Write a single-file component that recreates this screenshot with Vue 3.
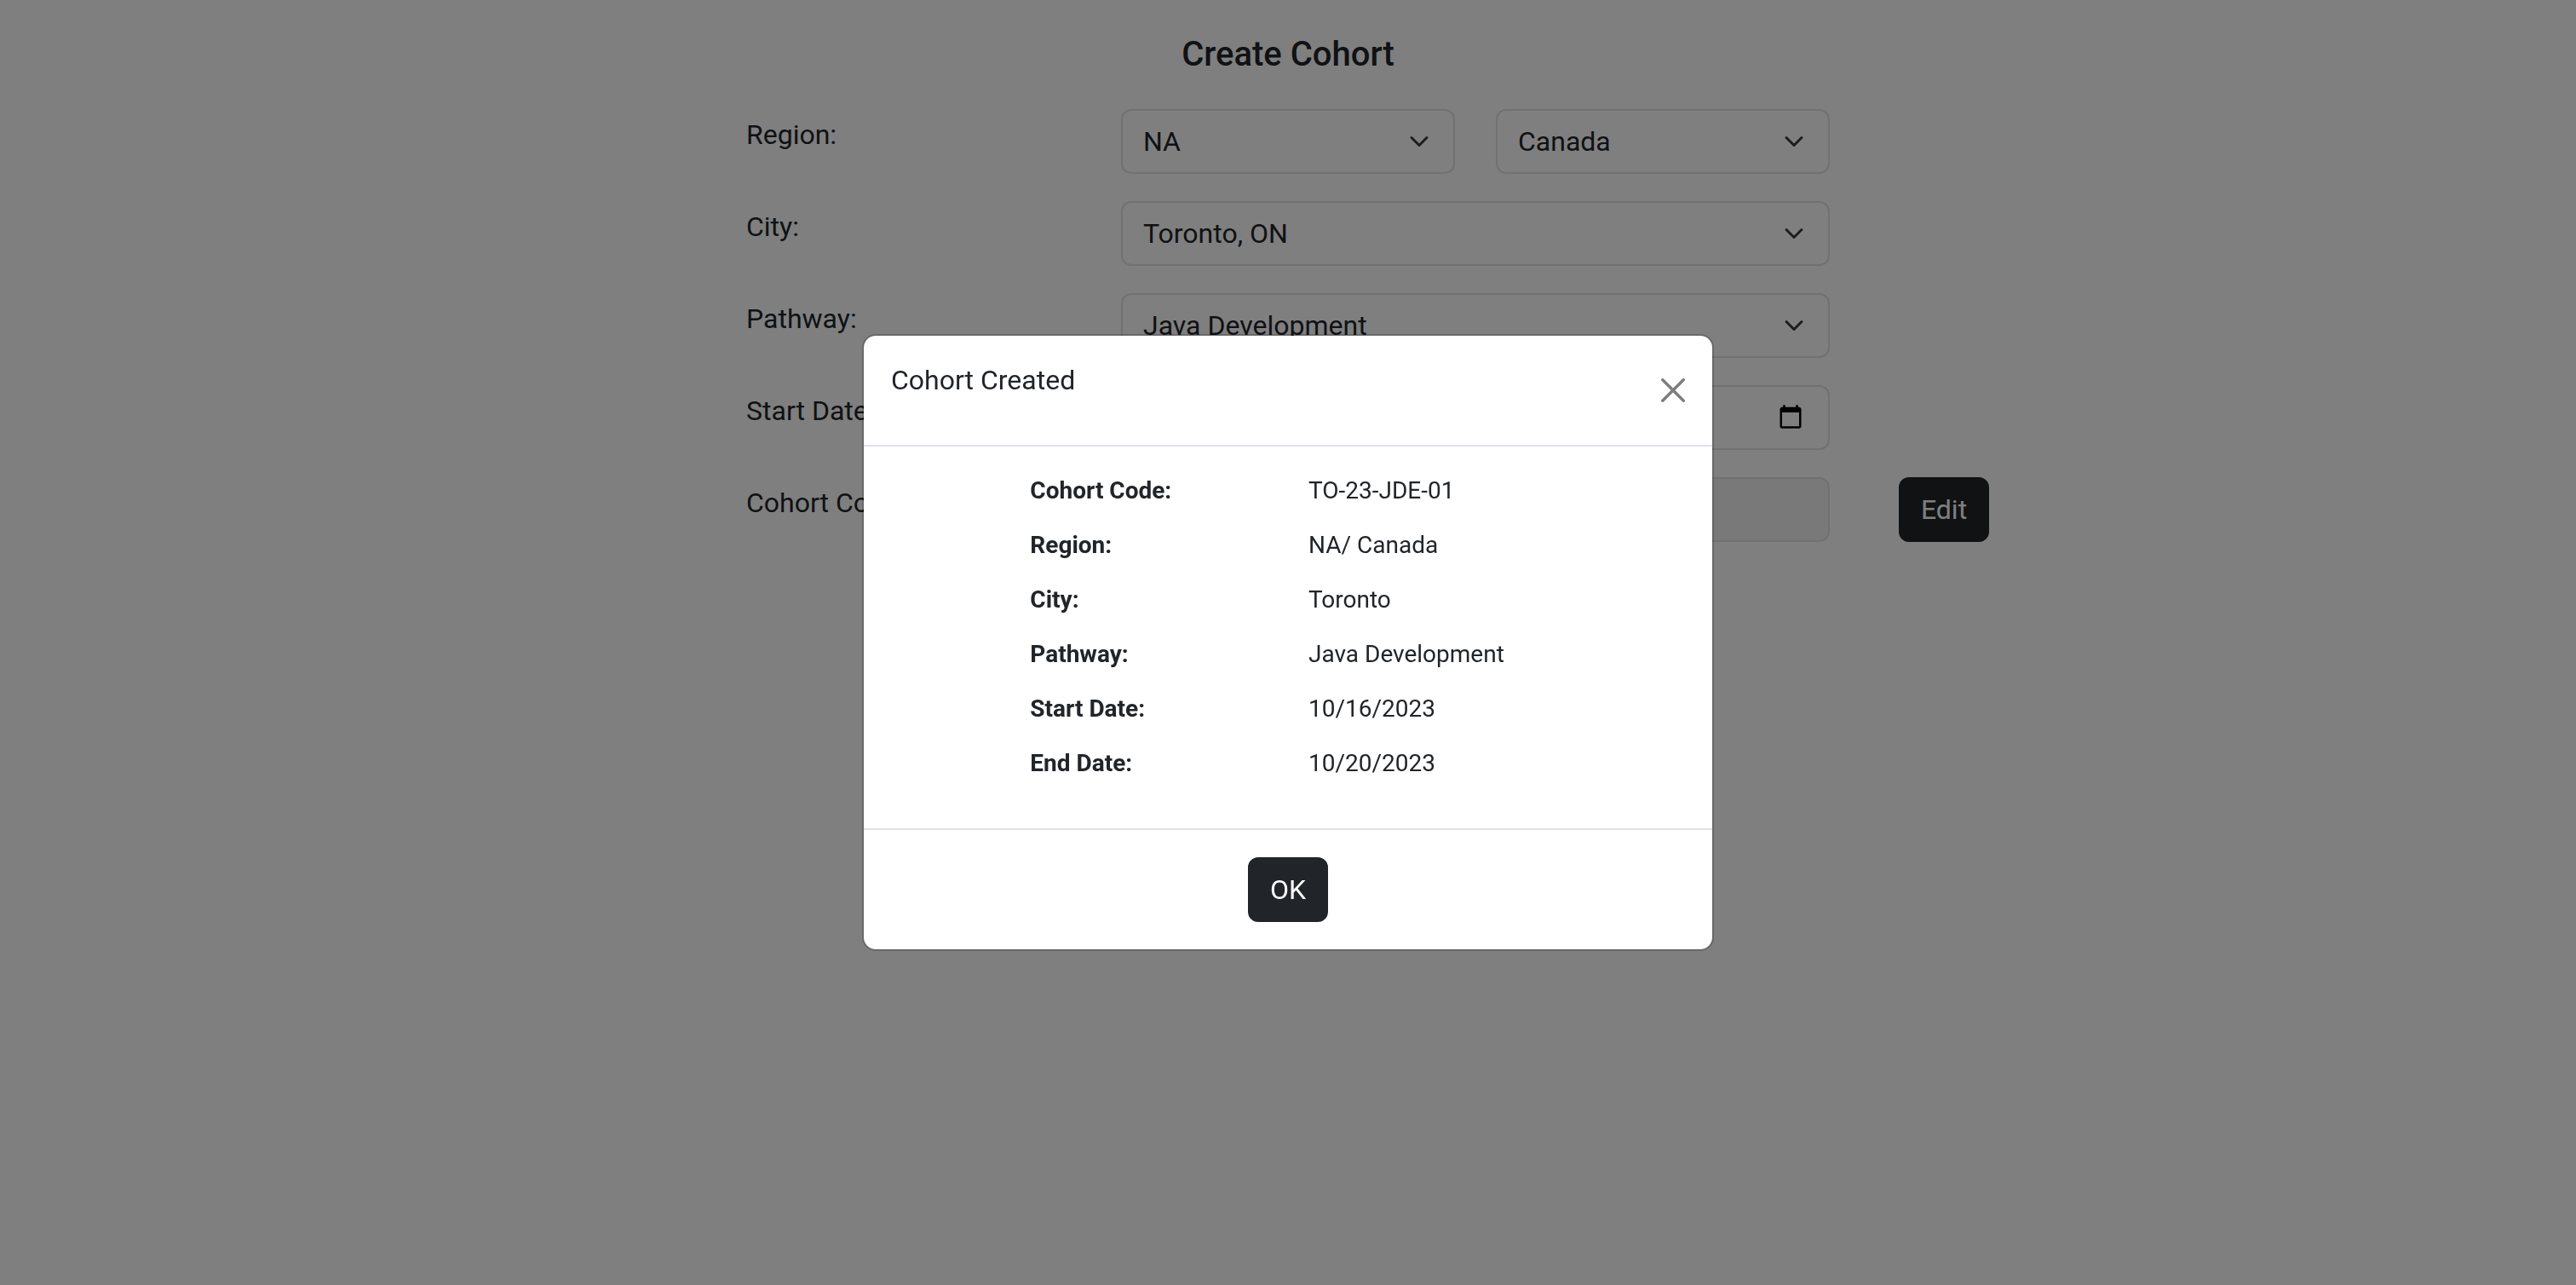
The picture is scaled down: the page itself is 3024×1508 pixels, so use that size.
<script setup>
import { ref } from 'vue'

const region = ref('NA')
const country = ref('Canada')
const city = ref('Toronto, ON')
const pathway = ref('Java Development')
const startDate = ref('2023-10-16')
const cohortCode = ref('TO-23-JDE-01')
const showModal = ref(true)

const summary = [
  { label: 'Cohort Code:', value: 'TO-23-JDE-01' },
  { label: 'Region:', value: 'NA/ Canada' },
  { label: 'City:', value: 'Toronto' },
  { label: 'Pathway:', value: 'Java Development' },
  { label: 'Start Date:', value: '10/16/2023' },
  { label: 'End Date:', value: '10/20/2023' }
]
</script>

<template>
  <main class="page">
    <h1 class="page-title">Create Cohort</h1>
    <form class="form" @submit.prevent>
      <div class="row">
        <label class="cell name" for="region">Region:</label>
        <div class="cell half">
          <div class="field">
            <select id="region" v-model="region" class="control">
              <option>NA</option>
            </select>
            <svg class="chevron" viewBox="0 0 16 16" aria-hidden="true"><path d="m2 5 6 6 6-6" /></svg>
          </div>
        </div>
        <div class="cell half">
          <div class="field">
            <select v-model="country" class="control" aria-label="Country">
              <option>Canada</option>
            </select>
            <svg class="chevron" viewBox="0 0 16 16" aria-hidden="true"><path d="m2 5 6 6 6-6" /></svg>
          </div>
        </div>
      </div>
      <div class="row">
        <label class="cell name" for="city">City:</label>
        <div class="cell full">
          <div class="field">
            <select id="city" v-model="city" class="control">
              <option>Toronto, ON</option>
            </select>
            <svg class="chevron" viewBox="0 0 16 16" aria-hidden="true"><path d="m2 5 6 6 6-6" /></svg>
          </div>
        </div>
      </div>
      <div class="row">
        <label class="cell name" for="pathway">Pathway:</label>
        <div class="cell full">
          <div class="field">
            <select id="pathway" v-model="pathway" class="control">
              <option>Java Development</option>
            </select>
            <svg class="chevron" viewBox="0 0 16 16" aria-hidden="true"><path d="m2 5 6 6 6-6" /></svg>
          </div>
        </div>
      </div>
      <div class="row">
        <label class="cell name" for="start">Start Date:</label>
        <div class="cell full">
          <div class="field">
            <input id="start" v-model="startDate" type="date" class="control" />
            <svg class="calendar" viewBox="0 0 24 24" aria-hidden="true">
              <path d="M20 3h-1V1h-2v2H7V1H5v2H4c-1.1 0-2 .9-2 2v16c0 1.1.9 2 2 2h16c1.1 0 2-.9 2-2V5c0-1.1-.9-2-2-2zm0 18H4V8h16v13z" />
            </svg>
          </div>
        </div>
      </div>
      <div class="row">
        <label class="cell name" for="code">Cohort Code:</label>
        <div class="cell full">
          <div class="field">
            <input id="code" v-model="cohortCode" type="text" class="control" disabled />
          </div>
        </div>
        <div class="cell action">
          <button type="button" class="btn">Edit</button>
        </div>
      </div>
    </form>
  </main>

  <div v-if="showModal" class="backdrop">
    <section class="modal" role="dialog" aria-modal="true" aria-labelledby="modal-title">
      <header class="modal-header">
        <h2 id="modal-title" class="modal-title">Cohort Created</h2>
        <button type="button" class="close" aria-label="Close" @click="showModal = false">
          <svg viewBox="0 0 16 16" aria-hidden="true">
            <path d="M.293.293a1 1 0 0 1 1.414 0L8 6.586 14.293.293a1 1 0 1 1 1.414 1.414L9.414 8l6.293 6.293a1 1 0 0 1-1.414 1.414L8 9.414l-6.293 6.293a1 1 0 0 1-1.414-1.414L6.586 8 .293 1.707a1 1 0 0 1 0-1.414z" />
          </svg>
        </button>
      </header>
      <dl class="summary">
        <div v-for="item in summary" :key="item.label" class="summary-row">
          <dt>{{ item.label }}</dt>
          <dd>{{ item.value }}</dd>
        </div>
      </dl>
      <footer class="modal-footer">
        <button type="button" class="btn" @click="showModal = false">OK</button>
      </footer>
    </section>
  </div>
</template>

<style>
body {
  margin: 0;
  background: #fff;
  color: #212529;
  font-family: Roboto, 'Liberation Sans', sans-serif;
  font-size: 32px;
  line-height: 48px;
}
</style>

<style scoped>
*,
*::before,
*::after {
  box-sizing: border-box;
}

.page {
  max-width: 2640px;
  min-height: 100vh;
  margin: 0 auto;
  padding-top: 40px;
}

.page-title {
  margin: 0 0 40px;
  font-size: 40px;
  font-weight: 500;
  line-height: 48px;
  text-align: center;
}

.form {
  display: flex;
  flex-direction: column;
  gap: 32px;
}

.row {
  display: grid;
  grid-template-columns: repeat(12, minmax(0, 1fr));
}

.cell {
  padding: 0 24px;
}

.name {
  grid-column: 4 / span 2;
  padding-top: 6px;
}

.half {
  grid-column: span 2;
}

.full {
  grid-column: span 4;
}

.action {
  grid-column: span 1;
  display: flex;
  justify-content: center;
}

.field {
  position: relative;
}

.control {
  display: block;
  width: 100%;
  height: 76px;
  margin: 0;
  padding: 12px 24px;
  border: 2px solid #dee2e6;
  border-radius: 12px;
  background: #fff;
  color: #212529;
  font: inherit;
  appearance: none;
}

.control:disabled {
  background: #f2f2f2;
}

.control::-webkit-calendar-picker-indicator {
  opacity: 0;
}

.chevron,
.calendar {
  position: absolute;
  top: 50%;
  pointer-events: none;
}

.chevron {
  right: 30px;
  width: 24px;
  height: 24px;
  margin-top: -12px;
  fill: none;
  stroke: #343a40;
  stroke-width: 2;
  stroke-linecap: round;
  stroke-linejoin: round;
}

.calendar {
  right: 31px;
  width: 30px;
  height: 30px;
  margin-top: -16px;
  fill: #000;
}

.btn {
  flex: none;
  padding: 12px 24px;
  border: 2px solid #212529;
  border-radius: 12px;
  background: #212529;
  color: #fff;
  font: inherit;
  cursor: pointer;
}

.backdrop {
  position: fixed;
  inset: 0;
  display: flex;
  align-items: center;
  justify-content: center;
  background: rgba(0, 0, 0, 0.5);
}

.modal {
  width: 100%;
  max-width: 1000px;
  border: 2px solid rgba(0, 0, 0, 0.175);
  border-radius: 16px;
  background: #fff;
  background-clip: padding-box;
}

.modal-header {
  display: flex;
  align-items: flex-start;
  justify-content: space-between;
  padding: 32px;
  border-bottom: 2px solid #dee2e6;
}

.modal-title {
  margin: 0;
  font-size: 32px;
  font-weight: 400;
  line-height: 40px;
}

.close {
  display: flex;
  align-items: center;
  height: 64px;
  padding: 0;
  border: 0;
  background: none;
  opacity: 0.5;
  cursor: pointer;
}

.close svg {
  width: 28px;
  height: 28px;
  fill: #000;
}

.summary {
  margin: 0;
  padding: 32px 8px;
  font-size: 28px;
  line-height: 40px;
}

.summary-row {
  display: grid;
  grid-template-columns: repeat(6, minmax(0, 1fr));
  padding-bottom: 24px;
}

.summary dt,
.summary dd {
  margin: 0;
  padding: 0 24px;
}

.summary dt {
  grid-column: 2 / span 2;
  font-weight: 700;
}

.summary dd {
  grid-column: span 3;
}

.modal-footer {
  display: flex;
  justify-content: center;
  padding: 32px;
  border-top: 2px solid #dee2e6;
}
</style>
